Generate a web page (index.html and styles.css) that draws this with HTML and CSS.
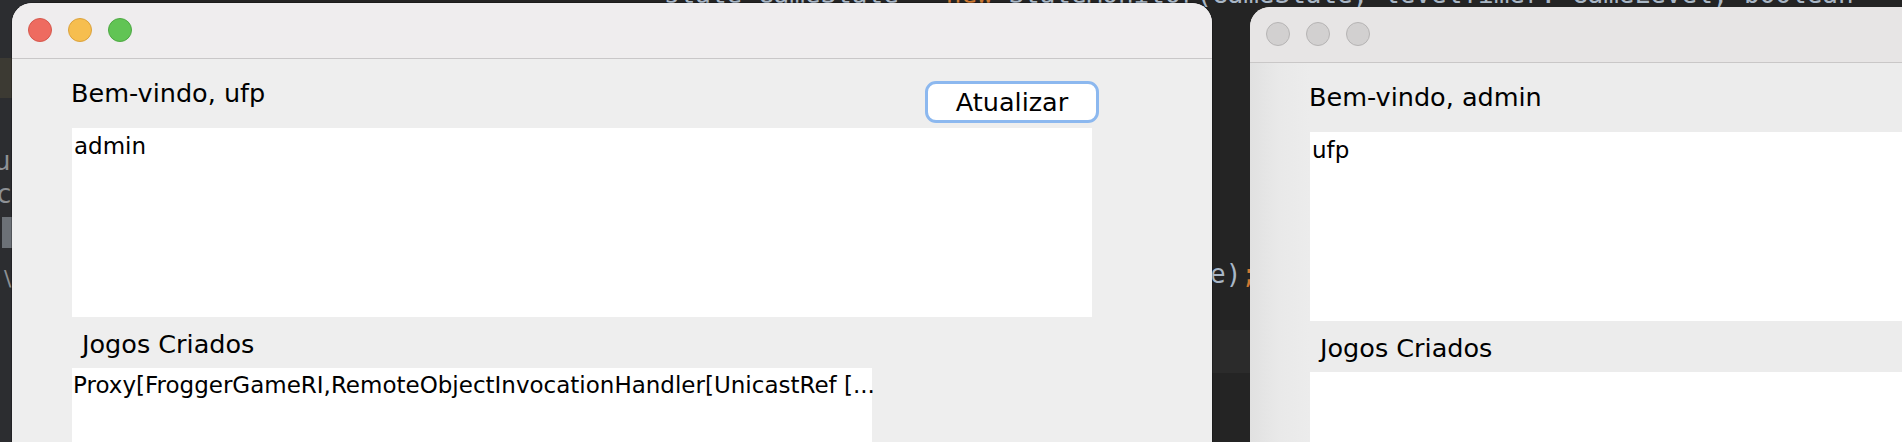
FILE: index.html
```html
<!DOCTYPE html>
<html lang="pt">
<head>
<meta charset="utf-8">
<title>Frogger RMI</title>
<link rel="stylesheet" href="styles.css">
</head>
<body>
<div class="desktop">
  <div class="editor">
    <div class="gutter">
      <div class="gutter-band"></div>
      <span class="gutter-glyph g-u">u</span>
      <span class="gutter-glyph g-c">c</span>
      <span class="gutter-box"></span>
      <span class="gutter-glyph g-slash">\</span>
    </div>
    <div class="code-line code-top">state GameState = <span class="kw">new</span> StateMonitor(GameState, levelTimer: GameLevel, boolean</div>
    <div class="code-line code-mid">e)<span class="kw">;</span></div>
    <div class="caret-band"></div>
  </div>

  <section class="window win-active">
    <div class="titlebar">
      <div class="lights">
        <span class="light red"></span>
        <span class="light yellow"></span>
        <span class="light green"></span>
      </div>
    </div>
    <div class="content">
      <div class="header-row">
        <span class="label">Bem-vindo, ufp</span>
        <button class="btn">Atualizar</button>
      </div>
      <div class="textarea">admin</div>
      <div class="section-label">Jogos Criados</div>
      <div class="list">
        <div class="list-item">Proxy[FroggerGameRI,RemoteObjectInvocationHandler[UnicastRef [...</div>
      </div>
    </div>
  </section>

  <section class="window win-inactive">
    <div class="titlebar">
      <div class="lights">
        <span class="light"></span>
        <span class="light"></span>
        <span class="light"></span>
      </div>
    </div>
    <div class="content">
      <div class="header-row">
        <span class="label">Bem-vindo, admin</span>
        <button class="btn">Atualizar</button>
      </div>
      <div class="textarea">ufp</div>
      <div class="section-label">Jogos Criados</div>
      <div class="list"></div>
    </div>
  </section>
</div>
</body>
</html>
```

FILE: styles.css
```css
* { box-sizing: border-box; }

html, body {
  margin: 0;
  padding: 0;
  width: 1902px;
  height: 442px;
  overflow: hidden;
  background: #252526;
}

.desktop {
  position: relative;
  width: 1902px;
  height: 442px;
  overflow: hidden;
  font-family: "DejaVu Sans", "Liberation Sans", sans-serif;
  color: #000;
}

/* ---------- IDE behind the windows ---------- */
.editor {
  position: absolute;
  inset: 0;
  background: #242424;
}

.gutter {
  position: absolute;
  left: 0;
  top: 0;
  width: 40px;
  height: 442px;
  background: #2c2d30;
}

.gutter-band {
  position: absolute;
  left: 0;
  top: 58px;
  width: 40px;
  height: 40px;
  background: #3c3a33;
}

.gutter-glyph {
  position: absolute;
  font-family: "DejaVu Sans", sans-serif;
  font-size: 26px;
  line-height: 26px;
  color: #8e9195;
}

.g-u { left: -6px; top: 148px; }
.g-c { left: -3px; top: 181px; }
.g-slash { left: 4px; top: 266px; font-size: 22px; }

.gutter-box {
  position: absolute;
  left: 2px;
  top: 217px;
  width: 20px;
  height: 31px;
  background: #6c7177;
}

.code-line {
  position: absolute;
  font-family: "DejaVu Sans Mono", "Liberation Mono", monospace;
  font-size: 26px;
  line-height: 30px;
  color: #a9b7c6;
  white-space: pre;
}

.code-line .kw { color: #cc7832; }

.code-top { left: 664px; top: -21px; }
.code-mid { left: 1210px; top: 259px; }

.caret-band {
  position: absolute;
  left: 1212px;
  top: 330px;
  width: 40px;
  height: 43px;
  background: #2b2b2b;
}

/* ---------- windows ---------- */
.window {
  position: absolute;
  height: 520px;
  border-radius: 20px 20px 0 0;
  overflow: hidden;
}

.win-active {
  left: 12px;
  top: 3px;
  width: 1200px;
  background: #eeeeee;
  box-shadow: 0 0 0 1px rgba(0, 0, 0, 0.25);
}

.win-inactive {
  left: 1250px;
  top: 7px;
  width: 700px;
  background: #ececec;
}

.titlebar {
  height: 56px;
  display: flex;
  align-items: center;
  padding-left: 16px;
  border-bottom: 1px solid #c9c7c8;
}

.win-active .titlebar { background: #efedee; }
.win-inactive .titlebar { background: #e7e5e5; border-bottom-color: #c9c7c7; }

.lights {
  display: flex;
  gap: 16px;
  margin-top: -1px;
}

.light {
  width: 24px;
  height: 24px;
  border-radius: 50%;
  background: #d2d0d0;
  border: 1px solid #b6b4b4;
}

.light.red { background: #ee6b60; border-color: #d5584d; }
.light.yellow { background: #f6be4f; border-color: #dba23d; }
.light.green { background: #61c454; border-color: #4ea843; }

.content {
  padding-left: 60px;
}

.win-inactive .content {
  background: linear-gradient(to right, #e1e1e1 0, #e9e9e9 30px, #ececec 60px);
}

.header-row {
  display: flex;
  justify-content: space-between;
  align-items: flex-start;
  width: 1027px;
  height: 69px;
}

.label {
  margin-top: 19px;
  margin-left: -1px;
  font-size: 25.5px;
  line-height: 30px;
}

.btn {
  margin-top: 22px;
  width: 174px;
  height: 42px;
  padding: 0;
  font-family: "DejaVu Sans", "Liberation Sans", sans-serif;
  font-size: 25.5px;
  line-height: 30px;
  color: #000;
  background: #ffffff;
  border: 3px solid #8cb8ef;
  border-radius: 11px;
}

.textarea {
  width: 1020px;
  height: 189px;
  background: #ffffff;
  padding: 5px 2px;
  font-size: 23px;
  line-height: 26px;
}

.section-label {
  height: 51px;
  padding: 12px 0 0 10px;
  font-size: 25.5px;
  line-height: 30px;
}

.list {
  width: 800px;
  height: 200px;
  background: #ffffff;
  padding: 4px 1px;
}

.list-item {
  font-size: 23px;
  line-height: 26px;
  white-space: nowrap;
}
```
